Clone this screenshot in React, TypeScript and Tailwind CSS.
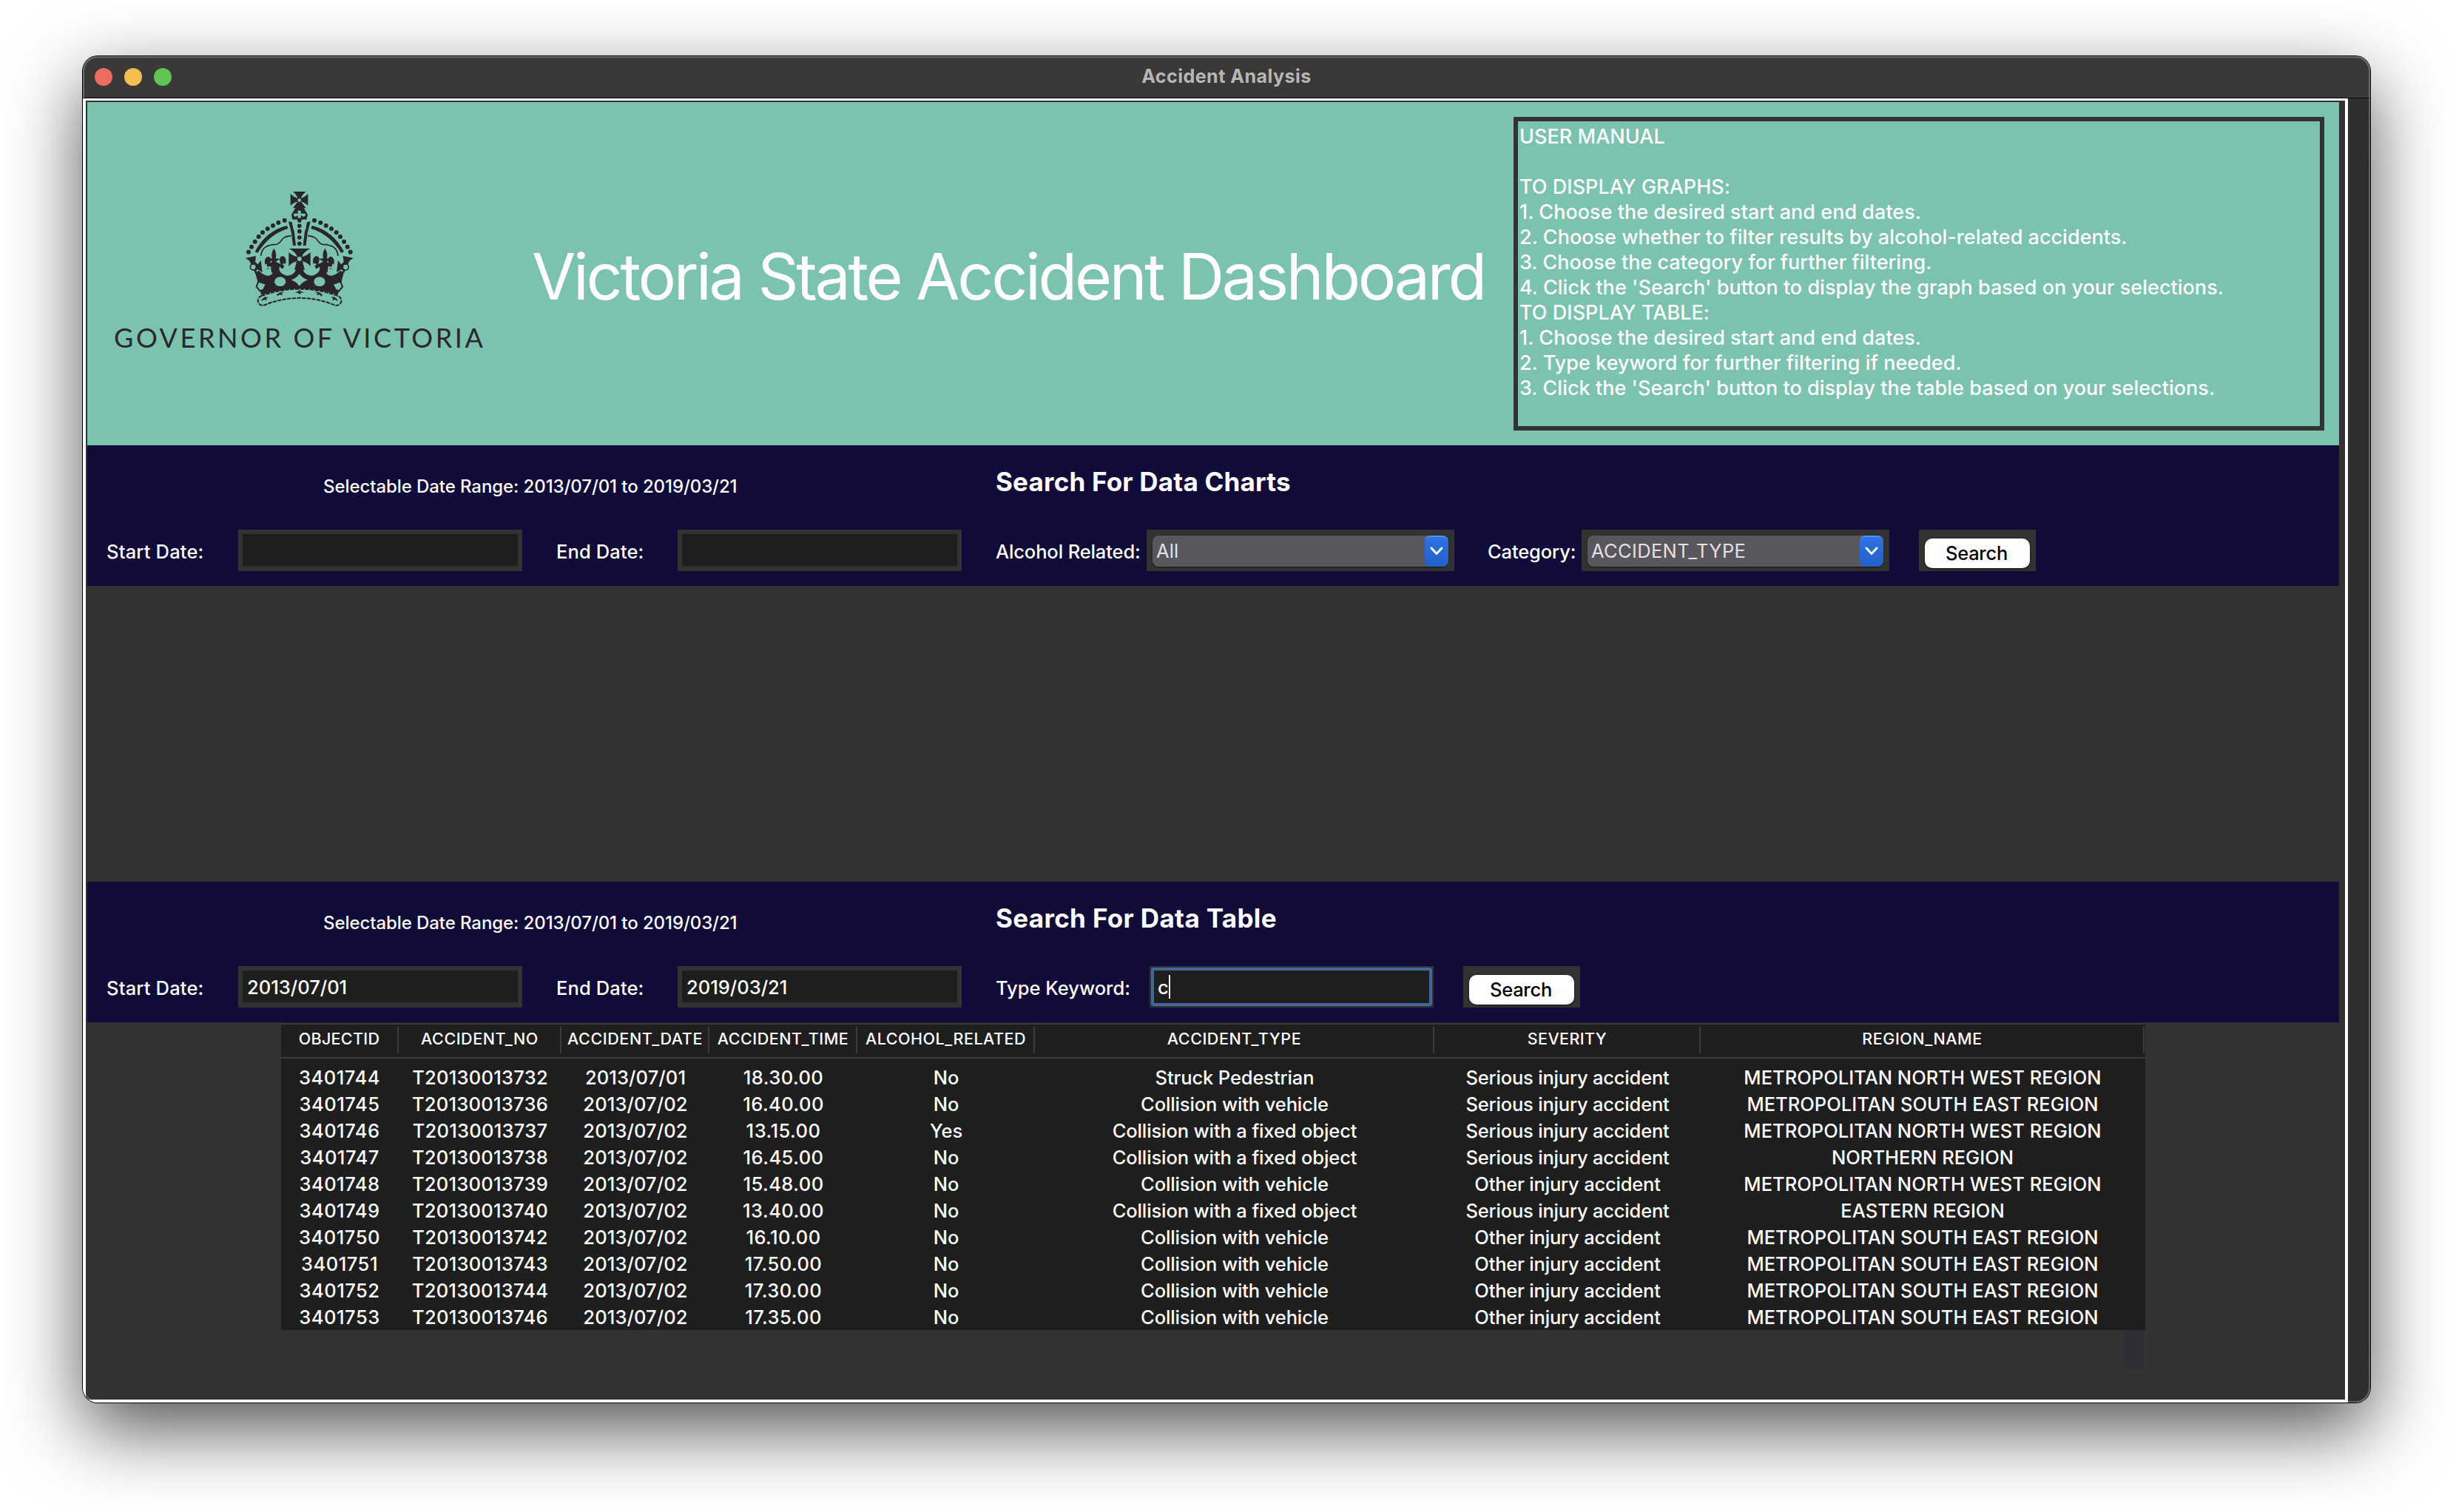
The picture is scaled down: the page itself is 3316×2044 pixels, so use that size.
import type { ReactNode } from "react";

const manual = [
  "USER MANUAL",
  "",
  "TO DISPLAY GRAPHS:",
  "1. Choose the desired start and end dates.",
  "2. Choose whether to filter results by alcohol-related accidents.",
  "3. Choose the category for further filtering.",
  "4. Click the 'Search' button to display the graph based on your selections.",
  "TO DISPLAY TABLE:",
  "1. Choose the desired start and end dates.",
  "2. Type keyword for further filtering if needed.",
  "3. Click the 'Search' button to display the table based on your selections.",
];

const NW = "METROPOLITAN NORTH WEST REGION";
const SE = "METROPOLITAN SOUTH EAST REGION";
const VEHICLE = "Collision with vehicle";
const FIXED = "Collision with a fixed object";
const SERIOUS = "Serious injury accident";
const OTHER = "Other injury accident";

const columns = [
  { name: "OBJECTID", width: "w-[160px]", spacing: "tracking-[0.5px]", head: "tracking-[0.3px]" },
  { name: "ACCIDENT_NO", width: "w-[220px]", spacing: "tracking-[0.25px]", head: "tracking-[0.54px]" },
  { name: "ACCIDENT_DATE", width: "w-[200px]", spacing: "tracking-[0.1px]", head: "tracking-[0.6px]" },
  { name: "ACCIDENT_TIME", width: "w-[200px]", spacing: "tracking-[0.45px]", head: "tracking-[0.54px]" },
  { name: "ALCOHOL_RELATED", width: "w-[240px]", spacing: "tracking-[0px]", head: "tracking-[0.52px]" },
  { name: "ACCIDENT_TYPE", width: "w-[540px]", spacing: "tracking-[-0.12px]", head: "tracking-[0.54px]" },
  { name: "SEVERITY", width: "w-[360px]", spacing: "tracking-[-0.2px]", head: "tracking-[0.4px]" },
  { name: "REGION_NAME", width: "w-[600px]", spacing: "tracking-[0.02px]", head: "tracking-[0.54px]" },
];

const rows = [
  ["3401744", "T20130013732", "2013/07/01", "18.30.00", "No", "Struck Pedestrian", SERIOUS, NW],
  ["3401745", "T20130013736", "2013/07/02", "16.40.00", "No", VEHICLE, SERIOUS, SE],
  ["3401746", "T20130013737", "2013/07/02", "13.15.00", "Yes", FIXED, SERIOUS, NW],
  ["3401747", "T20130013738", "2013/07/02", "16.45.00", "No", FIXED, SERIOUS, "NORTHERN REGION"],
  ["3401748", "T20130013739", "2013/07/02", "15.48.00", "No", VEHICLE, OTHER, NW],
  ["3401749", "T20130013740", "2013/07/02", "13.40.00", "No", FIXED, SERIOUS, "EASTERN REGION"],
  ["3401750", "T20130013742", "2013/07/02", "16.10.00", "No", VEHICLE, OTHER, SE],
  ["3401751", "T20130013743", "2013/07/02", "17.50.00", "No", VEHICLE, OTHER, SE],
  ["3401752", "T20130013744", "2013/07/02", "17.30.00", "No", VEHICLE, OTHER, SE],
  ["3401753", "T20130013746", "2013/07/02", "17.35.00", "No", VEHICLE, OTHER, SE],
];

const beads = [
  [254, 174], [229, 183], [207, 195], [185, 208], [165, 223], [149, 240], [134, 260], [120, 281], [108, 302],
];

/* Left half of the crown; mirrored about x = 314.5 for the right half. */
function CrownHalf() {
  return (
    <g>
      {beads.map(([x, y]) => (
        <circle key={x} cx={x} cy={y} r="9" />
      ))}
      <path d="M134 300Q180 215 264 195L268 207Q192 230 145 306Z" />
      <path d="M158 318C162 285 180 272 222 271C246 264 234 240 281 236" fill="none" stroke="#29252b" strokeWidth="5" />
      <path d="M270 178L284 181L294 225L300 276H288L282 225Z" />
      {/* half cross at the rim */}
      <path d="M96 326L138 318L135 343L146 352L158 336L164 384L143 372L134 388L112 338Z" />
      <circle cx="127" cy="363" r="12" fill="#7bc2af" stroke="#29252b" strokeWidth="5" />
      {/* fleur-de-lis */}
      <path d="M211 287C219 300 222 314 218 328L236 330L218 341L240 352C228 332 236 318 247 319C260 322 262 338 257 352C252 342 246 348 245 359L222 362L222 385H201L198 360L183 362C184 352 180 346 176 354C170 338 176 322 188 321C199 322 202 336 194 348L204 341L188 330L204 328C199 314 203 300 211 287Z" />
    </g>
  );
}

function Crown() {
  return (
    <svg viewBox="0 0 630 570" className="block h-[190px] w-[210px]" fill="#29252b">
      {/* arched body */}
      <path d="M134 383L162 374L314 340L467 374L495 383L484 425L470 476Q314 425 160 476L146 425Z" />
      {/* scoops in the upper rim */}
      <g fill="#7bc2af">
        <path d="M164 352C170 380 180 366 190 372C196 358 204 362 207 372C208 392 198 399 184 398C162 394 144 374 142 366Z" />
        <path d="M232 345H272L302 344C308 378 290 397 264 398C238 394 226 372 235 361Q246 380 253 358Z" />
        <path d="M465 352C459 380 449 366 439 372C433 358 425 362 422 372C421 392 431 399 445 398C467 394 485 374 487 366Z" />
        <path d="M397 345H357L327 344C321 378 339 397 365 398C391 394 403 372 394 361Q383 380 376 358Z" />
      </g>
      <CrownHalf />
      <g transform="translate(629 0) scale(-1 1)">
        <CrownHalf />
      </g>
      {/* centre cross */}
      <path d="M272 288H358Q330 302 324 322Q346 316 359 303V360Q346 344 326 339L336 374H294L304 339Q284 344 271 360V303Q284 316 306 322Q300 302 272 288Z" />
      <circle cx="314.500" cy="330" r="9" fill="#7bc2af" />
      {/* jewels */}
      <g fill="#7bc2af">
        <ellipse cx="236" cy="422" rx="23" ry="19" />
        <ellipse cx="396" cy="422" rx="23" ry="19" />
        <path d="M314 391Q326 408 348 415Q326 424 314 440Q303 424 281 415Q303 408 314 391Z" />
        <path d="M148 422L180 432L168 456L154 460L140 443Z" stroke="#29252b" strokeWidth="6" />
        <path d="M481 422L449 432L461 456L475 460L489 443Z" stroke="#29252b" strokeWidth="6" />
      </g>
      {/* ermine band */}
      <path
        d="M160 480Q314 424 470 480A20 20 0 0 1 462 519Q314 458 168 519A20 20 0 0 1 160 480Z"
        fill="#7bc2af"
        stroke="#29252b"
        strokeWidth="6"
        strokeDasharray="16 4"
      />
      <path d="M162 494L174 484L188 487L178 492L184 498L170 496L160 502ZM222 474L236 466L252 466L242 472L246 478L234 475L226 480ZM296 466L308 462L315 456L320 462L334 466L320 468L315 474L309 468ZM408 474L394 466L378 464L388 471L384 478L396 475L404 482ZM468 494L456 484L442 485L452 491L446 498L460 496L470 502Z" />
      {/* orb */}
      <path d="M302 118H328L348 150L343 170H286L282 150Z" />
      <path d="M308 134H320V146H338L340 152L332 160L320 153V164H308V153L298 160L290 152L292 146H308Z" fill="#7bc2af" />
      <path d="M284 173H345L340 210H290Z" fill="#7bc2af" />
      {[174, 196, 218, 243, 268].map((y) => (
        <circle key={y} cx="314.500" cy={y} r="8.500" />
      ))}
      {/* finial cross */}
      <path d="M288 57H341Q324 70 321 84Q336 80 349 66V114Q336 100 321 98L341 124H288L307 98Q292 100 278 114V66Q292 80 307 84Q304 70 288 57Z" />
      <circle cx="314" cy="92" r="7" fill="#7bc2af" />
    </svg>
  );
}

function Label({ className, children }: { className: string; children: ReactNode }) {
  return <div className={`shrink-0 text-[25.5px] leading-[60px] font-medium text-white ${className}`}>{children}</div>;
}

function DateEntry({ value }: { value?: string }) {
  return (
    <div className="h-[56px] w-[384px] shrink-0 bg-[#323232] p-[6px]">
      <div className="h-[44px] border-b-2 border-[#262626] bg-[#1e1e1e] pl-[6px] text-[25.5px] leading-[46px] font-medium text-white">
        {value}
      </div>
    </div>
  );
}

function Combo({ value, spacing }: { value: string; spacing: string }) {
  return (
    <div className="h-[56px] w-[416px] shrink-0 bg-[#323232] px-[8px] pt-[8px]">
      <div className="flex h-[42px] overflow-hidden rounded-[8px] bg-[#59565e] shadow-[0_1px_2px_rgba(0,0,0,0.6)]">
        <div className={`grow pl-[5px] text-[25.5px] leading-[42px] text-[#e2e1e3] ${spacing}`}>{value}</div>
        <div className="flex w-[32px] items-center justify-center rounded-[8px] border-t-2 border-[#5490ee] bg-linear-to-b from-[#2c72e6] to-[#245fc9] pb-[3px]">
          <svg viewBox="0 0 18 12" className="h-[12px] w-[18px]" fill="none" stroke="#fff" strokeWidth="3" strokeLinecap="round" strokeLinejoin="round">
            <path d="M2 2L9 9.500L16 2" />
          </svg>
        </div>
      </div>
    </div>
  );
}

function SearchButton() {
  return (
    <div className="ml-[40px] h-[56px] w-[158px] shrink-0 bg-[#323232] px-[8px] pt-[12px]">
      <button className="block h-[40px] w-full rounded-[10px] bg-white pr-[2px] text-center text-[25.5px] leading-[38px] font-medium tracking-[-0.25px] text-black shadow-[0_1px_3px_rgba(0,0,0,0.6)]">
        Search
      </button>
    </div>
  );
}

function SearchBand({ title, titleSpacing, start, end, children }: { title: string; titleSpacing: string; start?: string; end?: string; children: ReactNode }) {
  return (
    <section className="h-[190px] bg-[#110b3a]">
      <div className="flex h-[114px] pl-[319px]">
        <div className="mt-[41px] w-[909px] text-[24px] leading-[30px] font-medium tracking-[-0.08px] text-white">
          Selectable Date Range: 2013/07/01 to 2019/03/21
        </div>
        <h2 className={`mt-[28px] text-[35px] leading-[42px] font-bold text-white ${titleSpacing}`}>{title}</h2>
      </div>
      <div className="flex h-[56px] pl-[26px]">
        <Label className="w-[178px] tracking-[0.18px]">Start Date:</Label>
        <DateEntry value={start} />
        <Label className="ml-[46px] w-[164px] tracking-[0.12px]">End Date:</Label>
        <DateEntry value={end} />
        {children}
      </div>
    </section>
  );
}

function Table() {
  return (
    <div className="ml-[262px] h-[416px] w-[2520px] bg-[#1e1e1e] pt-px text-white">
      <div className="flex h-[48px] border-y-2 border-[#3b3b3b]">
        {columns.map((c) => (
          <div key={c.name} className={`flex shrink-0 pt-[3px] pr-px ${c.width}`}>
            <div className={`grow pr-[2px] text-center text-[21.5px] leading-[33px] font-medium ${c.head}`}>{c.name}</div>
            <div className="-ml-[2px] h-[36px] w-[2px] bg-[#3b3b3b]" />
          </div>
        ))}
      </div>
      <div className="pt-[7px]">
        {rows.map((r) => (
          <div key={r[0]} className="flex h-[36px] text-[25.5px] leading-[38px] font-medium">
            {r.map((v, i) => (
              <div key={i} className={`shrink-0 pr-[2px] text-center ${columns[i].width} ${columns[i].spacing}`}>
                {v}
              </div>
            ))}
          </div>
        ))}
      </div>
    </div>
  );
}

export default function App() {
  return (
    <div className="h-[2044px] w-[3316px] overflow-hidden bg-white pt-[76px] pl-[112px] font-['Inter',sans-serif] whitespace-nowrap">
      <div className="relative h-[1820px] w-[3092px] rounded-[20px] shadow-[0_0_0_1px_#000,0_36px_100px_rgba(0,0,0,0.68)]">
        <div className="flex h-full flex-col overflow-hidden rounded-[20px] bg-[#2c2e30]">
          <div className="relative flex h-[57px] shrink-0 justify-center border-b border-black bg-[#3b3838]">
            <div className="absolute top-[16px] left-[16px] flex gap-[16px]">
              <span className="size-[24px] rounded-full bg-[#ee6b5f]" />
              <span className="size-[24px] rounded-full bg-[#f5be4e]" />
              <span className="size-[24px] rounded-full bg-[#5fc452]" />
            </div>
            <div className="text-[25px] leading-[54px] font-bold tracking-[0.5px] text-[#b8b6b6]">Accident Analysis</div>
          </div>

          <div className="h-[1763px] w-[3062px] border-4 border-t-[3px] border-white bg-[#323232] pt-[2px] pr-[8px] pl-[2px]">
            <header className="flex h-[464px] bg-[#7bc2af]">
              <div className="w-[601px] shrink-0 pt-[102px]">
                <div className="pl-[182px]">
                  <Crown />
                </div>
                <div className="mt-[4px] pl-[36px] font-['Lato',sans-serif] text-[36px] leading-[44px] tracking-[3.58px] text-[#2b282d]">
                  GOVERNOR OF VICTORIA
                </div>
              </div>
              <h1 className="mt-[186px] w-[1327px] shrink-0 text-[86px] leading-[100px] tracking-[-3.3px] text-white">
                Victoria State Accident Dashboard
              </h1>
              <div className="mt-[20px] h-[424px] w-[1096px] shrink-0 border-[6px] border-[#333333] pt-[4px] pl-[2px] text-[27px] leading-[34px] font-medium tracking-[0.02px] text-white">
                {manual.map((line, i) => (
                  <div key={i} className="h-[34px]">
                    {line}
                  </div>
                ))}
              </div>
            </header>

            <SearchBand title="Search For Data Charts" titleSpacing="tracking-[0.2px]">
              <Label className="ml-[46px] w-[204px] tracking-[-0.12px]">Alcohol Related:</Label>
              <Combo value="All" spacing="tracking-[0.1px]" />
              <Label className="ml-[45px] w-[127px] tracking-[-0.12px]">Category:</Label>
              <Combo value="ACCIDENT_TYPE" spacing="tracking-[0.34px]" />
              <SearchButton />
            </SearchBand>

            <div className="h-[400px]" />

            <SearchBand title="Search For Data Table" titleSpacing="tracking-[0.34px]" start="2013/07/01" end="2019/03/21">
              <Label className="ml-[46px] w-[208px] tracking-[0px]">Type Keyword:</Label>
              <div className="h-[56px] w-[384px] shrink-0 bg-[#323232] p-[2px]">
                <div className="flex h-[52px] rounded-[4px] border-4 border-[#42689b] bg-[#1e1e1e] pl-[5px] text-[25.5px] leading-[46px] font-medium text-white">
                  <span className="w-[15px]">c</span>
                  <span className="mt-[6px] h-[32px] w-[2px] bg-white" />
                </div>
              </div>
              <SearchButton />
            </SearchBand>

            <Table />
            <div className="ml-[2754px] h-[52px] w-[26px] bg-[#2e2e38]" />
          </div>
        </div>
        {/* light edge of the window frame */}
        <div className="pointer-events-none absolute inset-0 rounded-[20px] shadow-[inset_0_0_0_2px_rgba(255,255,255,0.25)]" />
      </div>
    </div>
  );
}
